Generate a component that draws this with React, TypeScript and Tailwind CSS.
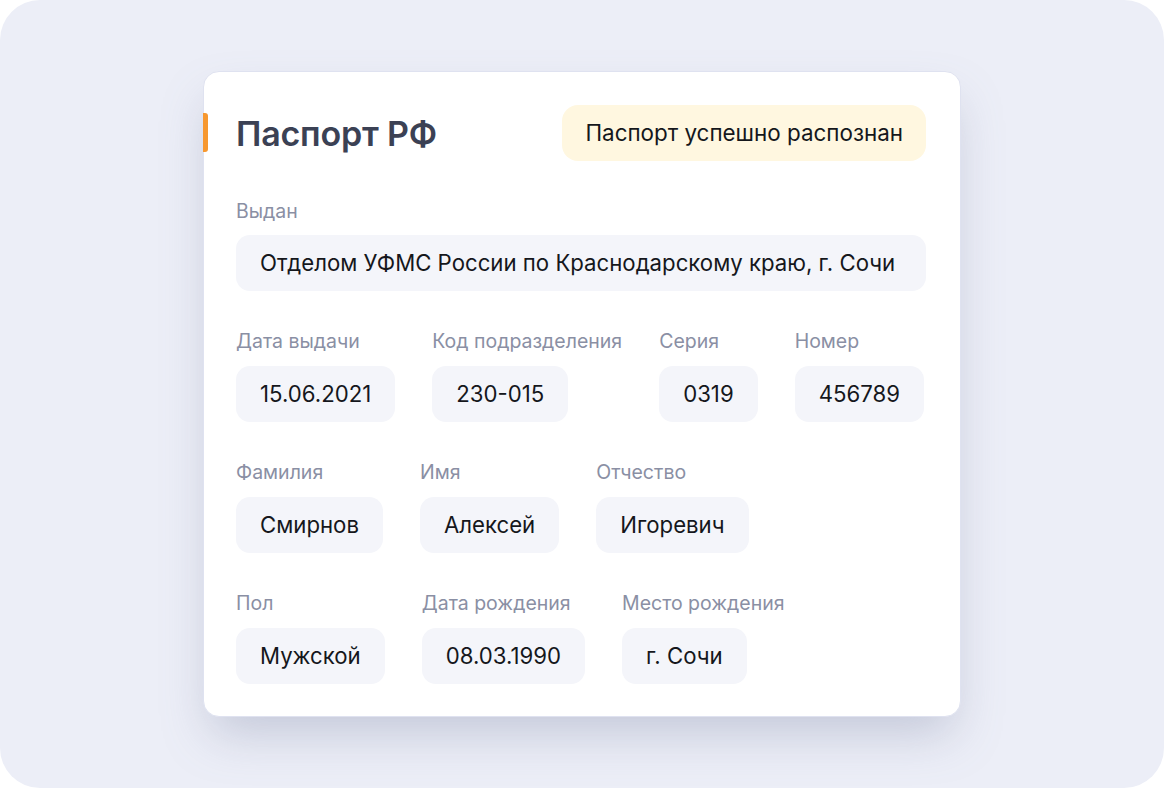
import React from "react";

const Field = ({ label, value }: { label: string; value: string }) => (
  <div className="flex flex-col items-start">
    <div className="text-[19.5px] leading-[24px] text-[#8a8fa4] mb-[13px] whitespace-nowrap">{label}</div>
    <div className="h-[56px] flex items-center px-[24px] rounded-[14px] bg-[#f4f5fa] text-[22.2px] text-[#15171c] whitespace-nowrap">
      {value}
    </div>
  </div>
);

export default function App() {
  return (
    <div
      className="w-[1164px] h-[788px] rounded-[40px] bg-[#eceef7] flex items-center justify-center"
      style={{ fontFamily: "Inter, 'Noto Sans', sans-serif" }}
    >
      <div className="relative w-[758px] bg-white rounded-[16px] border border-[#dfe2f0] pl-[32px] pr-[34px] pt-[33px] pb-[32px] shadow-[0_24px_48px_-8px_rgba(120,128,160,0.35)]">
        <div className="absolute left-[-1px] top-[41px] w-[5px] h-[39px] rounded-r-[3px] bg-[#f7982f]" />
        <div className="flex items-center justify-between h-[56px]">
          <div className="text-[34px] font-semibold text-[#3b4154] tracking-[-0.2px]">Паспорт РФ</div>
          <div className="h-[56px] flex items-center px-[23px] rounded-[16px] bg-[#fff7e0] text-[22.4px] text-[#15171c]">
            Паспорт успешно распознан
          </div>
        </div>
        <div className="mt-[38px] flex flex-col gap-[38px]">
          <div className="flex flex-col">
            <div className="text-[19.5px] leading-[24px] text-[#8a8fa4] mb-[12px]">Выдан</div>
            <div className="h-[56px] flex items-center px-[24px] rounded-[14px] bg-[#f4f5fa] text-[22.2px] text-[#15171c] whitespace-nowrap">
              Отделом УФМС России по Краснодарскому краю, г. Сочи
            </div>
          </div>
          <div className="flex gap-[37px]">
            <Field label="Дата выдачи" value="15.06.2021" />
            <Field label="Код подразделения" value="230-015" />
            <Field label="Серия" value="0319" />
            <Field label="Номер" value="456789" />
          </div>
          <div className="flex gap-[37px]">
            <Field label="Фамилия" value="Смирнов" />
            <Field label="Имя" value="Алексей" />
            <Field label="Отчество" value="Игоревич" />
          </div>
          <div className="flex gap-[37px]">
            <Field label="Пол" value="Мужской" />
            <Field label="Дата рождения" value="08.03.1990" />
            <Field label="Место рождения" value="г. Сочи" />
          </div>
        </div>
      </div>
    </div>
  );
}
